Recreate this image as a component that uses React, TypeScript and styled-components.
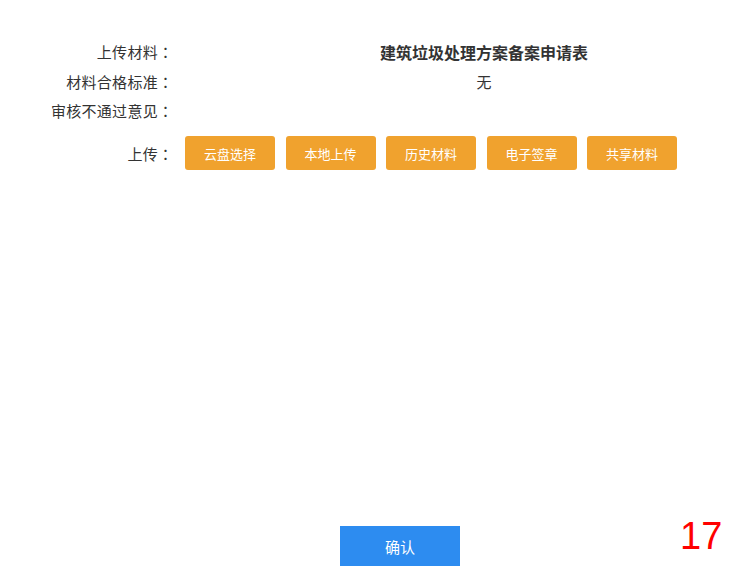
import { FC } from "react";
import styled, { createGlobalStyle } from "styled-components";

const GlobalStyle = createGlobalStyle`
  html, body {
    margin: 0;
    padding: 0;
    background: #fff;
    overflow: hidden;
  }
  body {
    font-family: "Noto Sans CJK SC", "Noto Sans", sans-serif;
    color: #333;
  }
`;

const Page = styled.div`
  position: relative;
  width: 750px;
  height: 579px;
  overflow: hidden;
  display: flex;
  flex-direction: column;
`;

const Form = styled.div`
  padding-top: 37px;
  display: flex;
  flex-direction: column;
`;

const Row = styled.div<{ $spaced?: boolean }>`
  display: flex;
  align-items: center;
  height: ${(p) => (p.$spaced ? "34px" : "29.5px")};
  margin-top: ${(p) => (p.$spaced ? "10.5px" : "0")};
`;

const Label = styled.div`
  width: 173px;
  flex-shrink: 0;
  text-align: right;
  font-size: 15px;
  letter-spacing: 0.3px;
  color: #333;
  white-space: nowrap;
`;

const Colon = styled.span`
  display: inline-block;
  width: 15px;
  text-align: center;
  letter-spacing: 0;
  font-family: "Noto Sans CJK TC", sans-serif;
`;

// value column is centred on x=484 in the original layout
const Value = styled.div<{ $bold?: boolean }>`
  flex: 1;
  min-width: 0;
  padding-left: 45px;
  text-align: center;
  font-size: ${(p) => (p.$bold ? "16px" : "15px")};
  font-weight: ${(p) => (p.$bold ? 700 : 400)};
  color: #333;
`;

const Buttons = styled.div`
  margin-left: 12px;
  display: flex;
  gap: 10.5px;
`;

const UploadButton = styled.button`
  width: 90px;
  height: 34px;
  border: none;
  border-radius: 3px;
  background: #f0a22e;
  color: #fff;
  font-family: inherit;
  font-size: 13px;
  padding: 0;
  cursor: pointer;
`;

const Footer = styled.div`
  margin-top: auto;
  padding: 0 0 13px 50px;
  display: flex;
  justify-content: center;
`;

const ConfirmButton = styled.button`
  width: 120px;
  height: 40px;
  border: none;
  background: #2d8cf0;
  color: #fff;
  font-family: inherit;
  font-size: 15px;
  padding: 0;
  cursor: pointer;
`;

const PageNumber = styled.div`
  position: absolute;
  left: 680px;
  top: 517px;
  font-family: "Liberation Sans", Arial, sans-serif;
  font-size: 38px;
  line-height: 38px;
  color: #ff0000;
`;

const uploads = ["云盘选择", "本地上传", "历史材料", "电子签章", "共享材料"];

const FieldLabel: FC<{ text: string }> = ({ text }) => (
  <Label>
    {text}
    <Colon>：</Colon>
  </Label>
);

const App: FC = () => {
  return (
    <>
      <GlobalStyle />
      <Page>
        <Form>
          <Row>
            <FieldLabel text="上传材料" />
            <Value $bold>建筑垃圾处理方案备案申请表</Value>
          </Row>
          <Row>
            <FieldLabel text="材料合格标准" />
            <Value>无</Value>
          </Row>
          <Row>
            <FieldLabel text="审核不通过意见" />
            <Value />
          </Row>
          <Row $spaced>
            <FieldLabel text="上传" />
            <Buttons>
              {uploads.map((name) => (
                <UploadButton key={name}>{name}</UploadButton>
              ))}
            </Buttons>
          </Row>
        </Form>
        <Footer>
          <ConfirmButton>确认</ConfirmButton>
        </Footer>
        <PageNumber>17</PageNumber>
      </Page>
    </>
  );
};

export default App;
